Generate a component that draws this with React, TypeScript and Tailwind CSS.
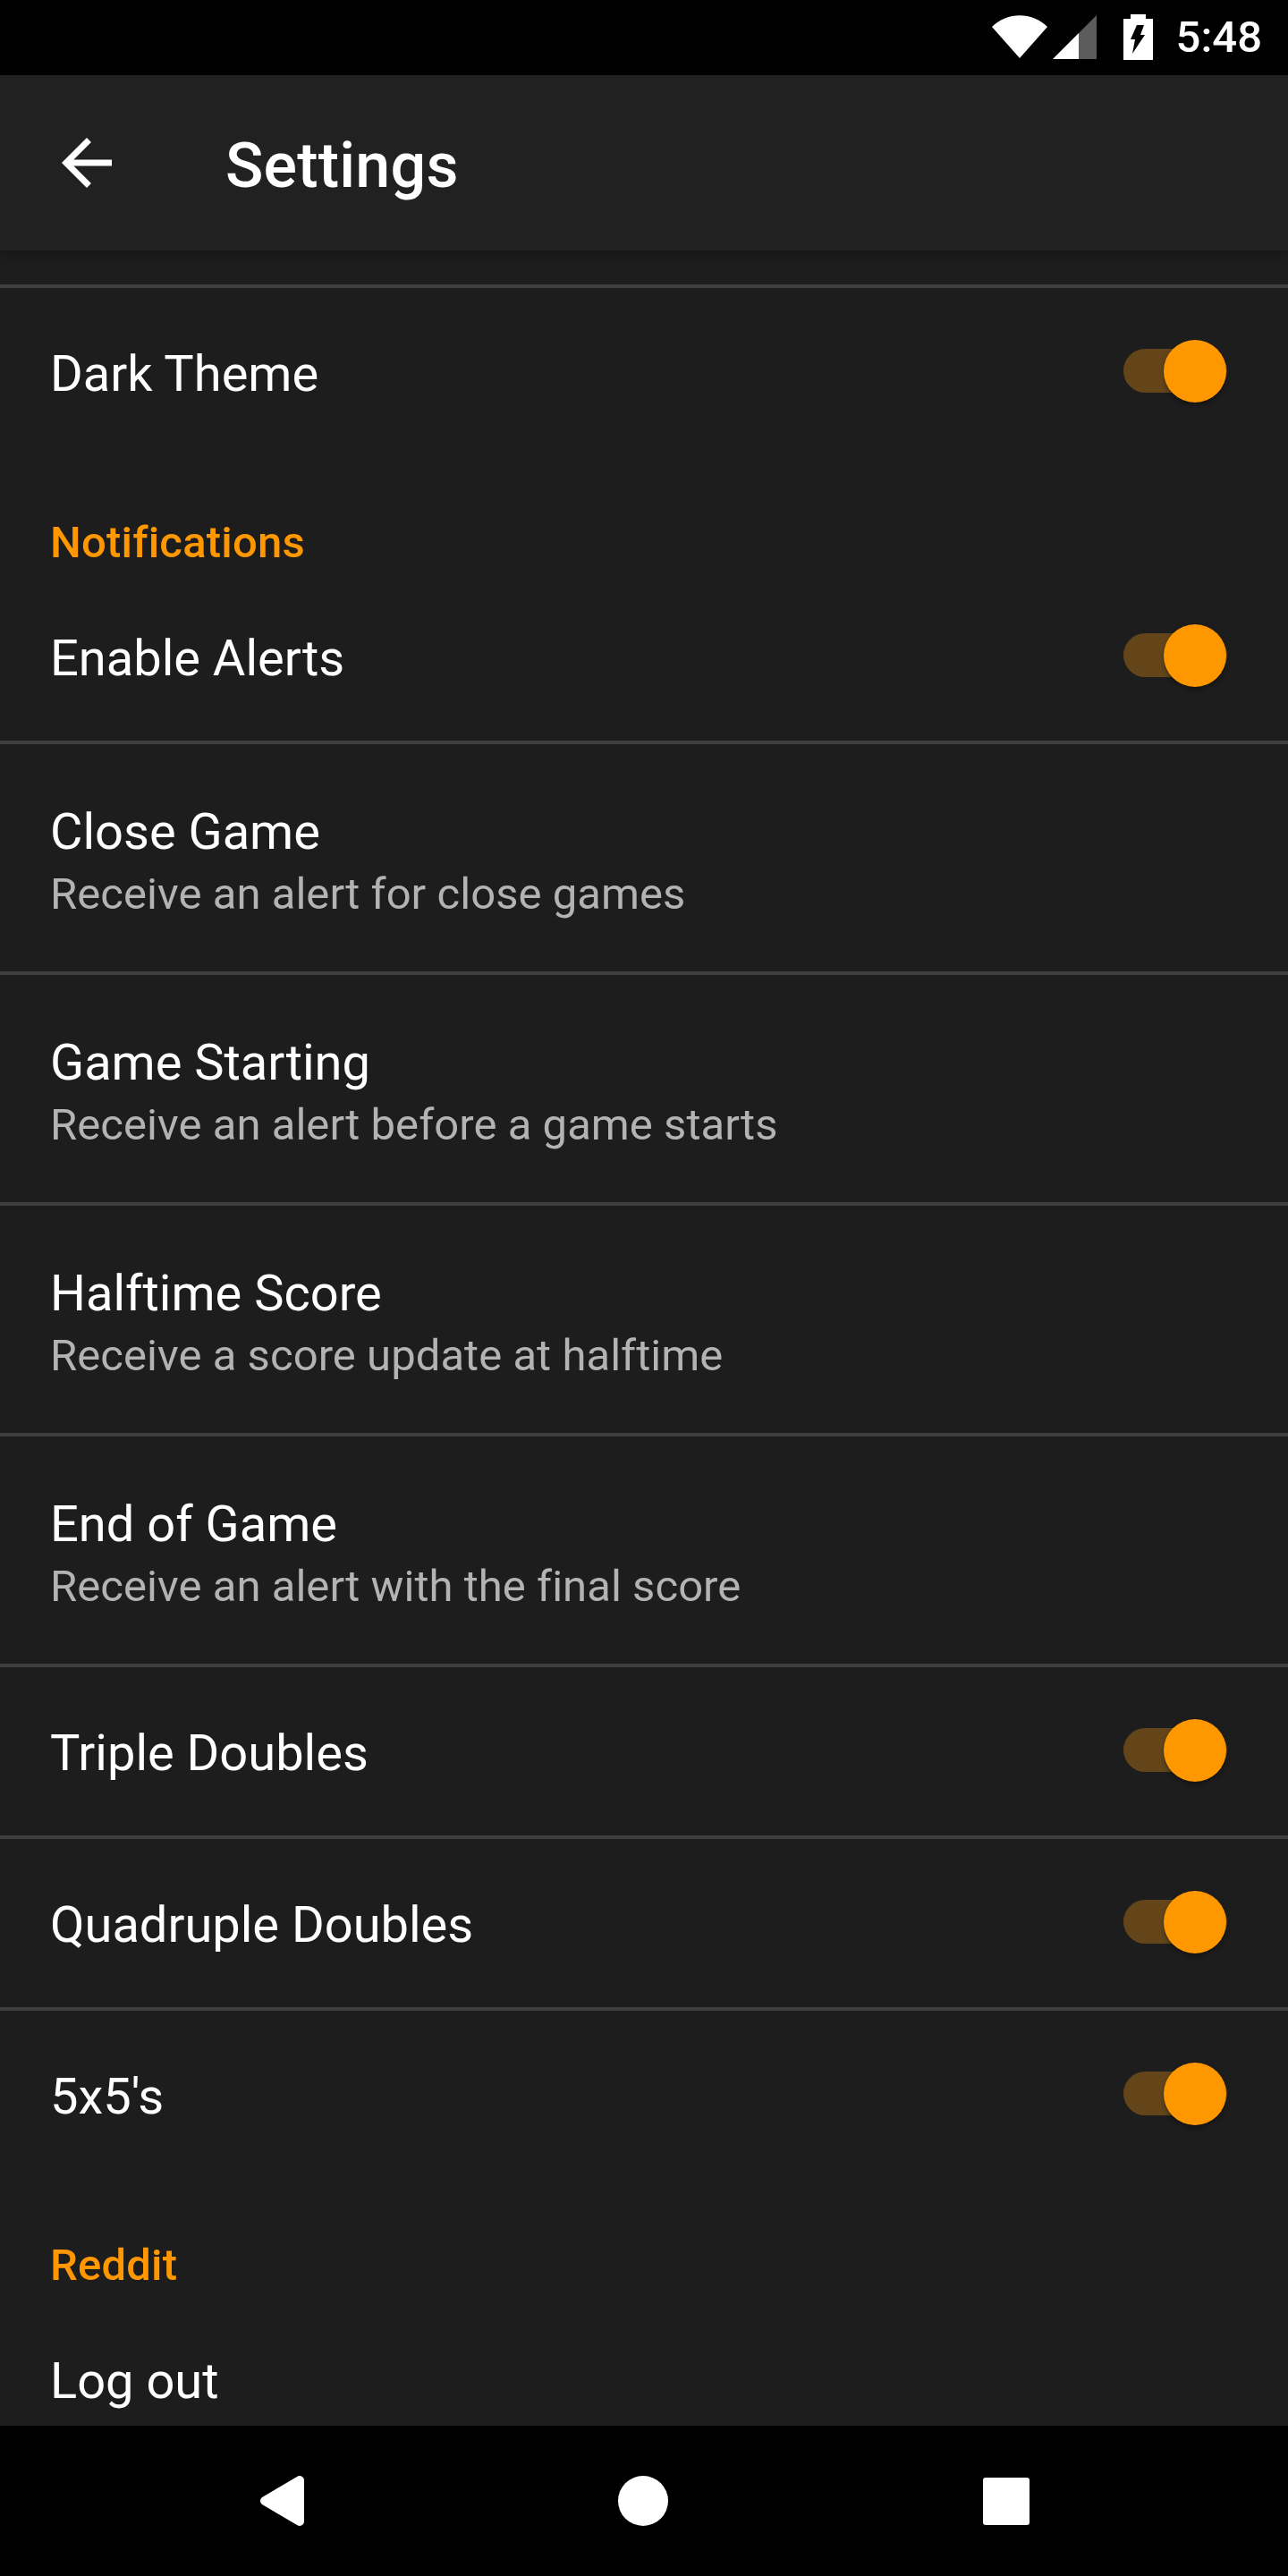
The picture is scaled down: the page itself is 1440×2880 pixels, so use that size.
import React from "react";

const Toggle: React.FC = () => (
  <div className="relative w-[119px] h-[70px] mb-[6px] shrink-0">
    <div className="absolute left-0 top-[10px] w-[116px] h-[49px] rounded-full bg-[#64451a]" />
    <div className="absolute left-[45px] top-0 w-[70px] h-[70px] rounded-full bg-[#ff9800] shadow-[0_3px_5px_rgba(0,0,0,0.35)]" />
  </div>
);

const SwitchRow = ({ title, border = true }: { title: string; border?: boolean }) => (
  <div className={`h-[192px] pl-[56px] pr-[65px] flex items-center justify-between ${border ? "pt-[4px] border-b-4 border-[#3f3f3f]" : ""}`}>
    <div className="text-[56px] leading-[70px] text-white">{title}</div>
    <Toggle />
  </div>
);

const AlertRow = ({ title, summary }: { title: string; summary: string }) => (
  <div className="h-[258px] pl-[56px] pt-[12px] border-b-4 border-[#3f3f3f] flex flex-col justify-center">
    <div className="text-[56px] leading-[70px] text-white">{title}</div>
    <div className="text-[49px] leading-[70px] tracking-[0.05px] text-[#b3b3b3]">{summary}</div>
  </div>
);

const Category = ({ title }: { title: string }) => (
  <div className="h-[126px] pl-[56px] pt-[64px] text-[49px] leading-[58px] tracking-[0.2px] font-medium text-[#ff9800]">{title}</div>
);

export default function App() {
  return (
    <div className="w-[1440px] h-[2880px] flex flex-col bg-[#1d1d1d] font-['Roboto',sans-serif] overflow-hidden">
      {/* status bar */}
      <div className="h-[84px] bg-black flex items-center justify-end pr-[29px] shrink-0">
        <svg width="62" height="48" viewBox="0 0 62 48" className="mt-[-3px]">
          <path d="M0 13 C17 -4 45 -4 62 13 L31 48 Z" fill="#fff" />
        </svg>
        <svg width="49" height="49" viewBox="0 0 49 49" className="ml-[6px] mt-[-2px]">
          <path d="M29 49 H0 L29 20 Z" fill="#fff" />
          <path d="M29 20 L49 0 V49 H29 Z" fill="#5c5c5c" />
        </svg>
        <svg width="33" height="51" viewBox="0 0 33 51" className="ml-[30px] mt-[-1px]">
          <path d="M8 0 H25 V5 H33 V51 H0 V5 H8 Z" fill="#fff" />
          <path d="M15 12 H23 L19 23 H24 L10 44 L13 28 H8 Z" fill="#000" />
        </svg>
        <div className="ml-[26px] text-[49px] leading-[58px] font-medium text-white">5:48</div>
      </div>

      {/* toolbar */}
      <div className="relative z-10 h-[196px] bg-[#212121] flex items-center pl-[55px] shrink-0 shadow-[0_4px_14px_rgba(0,0,0,0.3)]">
        <svg width="84" height="84" viewBox="0 0 24 24" fill="#fff">
          <path d="M20 11H7.83l5.59-5.59L12 4l-8 8 8 8 1.41-1.41L7.83 13H20v-2z" />
        </svg>
        <div className="ml-[113px] mt-[6px] text-[70px] leading-[82px] tracking-[0.2px] font-medium text-white">Settings</div>
      </div>

      {/* settings list */}
      <div className="flex-1 overflow-hidden">
        <div className="h-[42px] border-b-4 border-[#3f3f3f]" />
        <SwitchRow title="Dark Theme" border={false} />
        <Category title="Notifications" />
        <SwitchRow title="Enable Alerts" />
        <AlertRow title="Close Game" summary="Receive an alert for close games" />
        <AlertRow title="Game Starting" summary="Receive an alert before a game starts" />
        <AlertRow title="Halftime Score" summary="Receive a score update at halftime" />
        <AlertRow title="End of Game" summary="Receive an alert with the final score" />
        <SwitchRow title="Triple Doubles" />
        <SwitchRow title="Quadruple Doubles" />
        <SwitchRow title="5x5's" border={false} />
        <Category title="Reddit" />
        <div className="h-[192px] pl-[56px] flex items-center">
          <div className="text-[56px] leading-[70px] text-white">Log out</div>
        </div>
      </div>

      {/* nav bar */}
      <div className="h-[168px] bg-black shrink-0 flex items-center pl-[291px]">
        <svg width="49" height="56" viewBox="0 0 49 56">
          <path d="M44 5 V51 L5 28 Z" fill="#fff" stroke="#fff" strokeWidth="10" strokeLinejoin="round" />
        </svg>
        <div className="ml-[351px] w-[56px] h-[56px] rounded-full bg-white" />
        <div className="ml-[352px] w-[52px] h-[53px] rounded-[3px] bg-white" />
      </div>
    </div>
  );
}
